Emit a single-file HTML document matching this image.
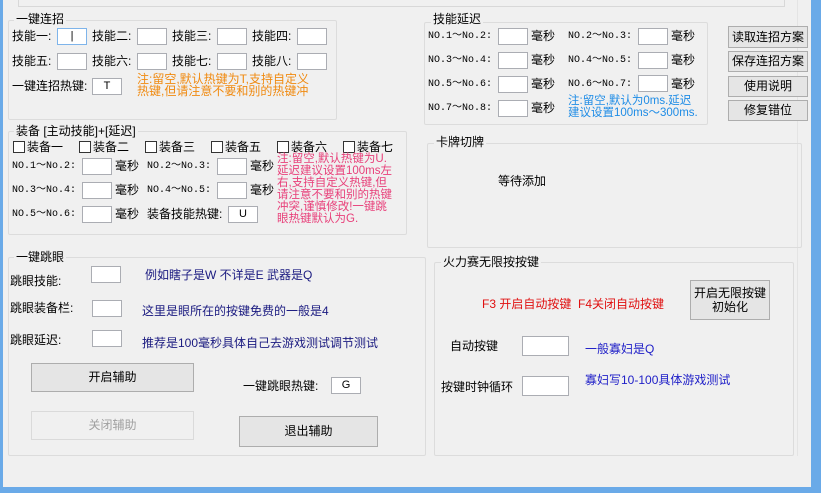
<!DOCTYPE html>
<html><head><meta charset="utf-8"><style>
*{margin:0;padding:0;box-sizing:border-box}
body{width:821px;height:493px;background:#f0f0f0;position:relative;overflow:hidden;font-family:"Liberation Sans","Noto Sans CJK SC",sans-serif;font-size:12px;color:#000}
div,span{position:absolute;white-space:nowrap;line-height:14px}
.g{border:1px solid #dcdcdc;border-radius:2px}
.gt{background:#f0f0f0;padding:0 2px;font-size:12px}
.i{background:#fff;border:1px solid #abadb3;width:30px;height:17px;text-align:center;font-size:11px;line-height:15px}
.b{background:#e5e5e5;border:1px solid #adadad;text-align:center;font-size:12px}
.c{width:12px;height:12px;border:1px solid #333;background:#fff;top:1px;left:0}
.n{font-family:"Liberation Mono",monospace;font-size:10px}
</style></head><body>
<div style="left:0;top:0;width:3px;height:493px;background:#6aaae8"></div>
<div style="left:811px;top:0;width:10px;height:493px;background:#6aaae8"></div>
<div style="left:0;top:487px;width:821px;height:6px;background:#6aaae8"></div>
<div style="left:18px;top:-2px;width:767px;height:9px;border:1px solid #d8d8d8"></div>
<div style="left:797px;top:0;width:1px;height:456px;background:#e4e4e4"></div>

<!-- 一键连招 -->
<div class="g" style="left:8px;top:20px;width:329px;height:100px"></div>
<div class="gt" style="left:14px;top:12px">一键连招</div>
<div style="left:12px;top:29px">技能一:</div><div class="i" style="left:57px;top:28px;border-color:#7eb4ea">|</div>
<div style="left:92px;top:29px">技能二:</div><div class="i" style="left:137px;top:28px"></div>
<div style="left:172px;top:29px">技能三:</div><div class="i" style="left:217px;top:28px"></div>
<div style="left:252px;top:29px">技能四:</div><div class="i" style="left:297px;top:28px"></div>
<div style="left:12px;top:54px">技能五:</div><div class="i" style="left:57px;top:53px"></div>
<div style="left:92px;top:54px">技能六:</div><div class="i" style="left:137px;top:53px"></div>
<div style="left:172px;top:54px">技能七:</div><div class="i" style="left:217px;top:53px"></div>
<div style="left:252px;top:54px">技能八:</div><div class="i" style="left:297px;top:53px"></div>
<div style="left:12px;top:79px">一键连招热键:</div><div class="i" style="left:92px;top:78px">T</div>
<div style="left:137px;top:73px;color:#f08a10;line-height:12px">注:留空,默认热键为T,支持自定义<br>热键,但请注意不要和别的热键冲</div>

<!-- 装备 -->
<div class="g" style="left:8px;top:131px;width:399px;height:104px"></div>
<div class="gt" style="left:14px;top:124px">装备 [主动技能]+[延迟]</div>
<div style="left:13px;top:140px"><span class="c"></span><span style="left:14px">装备一</span></div>
<div style="left:79px;top:140px"><span class="c"></span><span style="left:14px">装备二</span></div>
<div style="left:145px;top:140px"><span class="c"></span><span style="left:14px">装备三</span></div>
<div style="left:211px;top:140px"><span class="c"></span><span style="left:14px">装备五</span></div>
<div style="left:277px;top:140px"><span class="c"></span><span style="left:14px">装备六</span></div>
<div style="left:343px;top:140px"><span class="c"></span><span style="left:14px">装备七</span></div>
<div class="n" style="left:12px;top:160px">NO.1～No.2:</div><div class="i" style="left:82px;top:158px"></div><div style="left:115px;top:159px">毫秒</div>
<div class="n" style="left:147px;top:160px">NO.2～No.3:</div><div class="i" style="left:217px;top:158px"></div><div style="left:250px;top:159px">毫秒</div>
<div class="n" style="left:12px;top:184px">NO.3～No.4:</div><div class="i" style="left:82px;top:182px"></div><div style="left:115px;top:183px">毫秒</div>
<div class="n" style="left:147px;top:184px">NO.4～No.5:</div><div class="i" style="left:217px;top:182px"></div><div style="left:250px;top:183px">毫秒</div>
<div class="n" style="left:12px;top:208px">NO.5～No.6:</div><div class="i" style="left:82px;top:206px"></div><div style="left:115px;top:207px">毫秒</div>
<div style="left:147px;top:207px">装备技能热键:</div><div class="i" style="left:228px;top:206px">U</div>
<div style="left:277px;top:153px;color:#e8407a;line-height:12px;font-size:11.5px">注:留空,默认热键为U.<br>延迟建议设置100ms左<br>右,支持自定义热键,但<br>请注意不要和别的热键<br>冲突,谨慎修改!一键跳<br>眼热键默认为G.</div>

<!-- 技能延迟 -->
<div class="g" style="left:424px;top:22px;width:284px;height:103px"></div>
<div class="gt" style="left:431px;top:12px">技能延迟</div>
<div class="n" style="left:428px;top:30px">NO.1～No.2:</div><div class="i" style="left:498px;top:28px"></div><div style="left:531px;top:29px">毫秒</div>
<div class="n" style="left:568px;top:30px">NO.2～No.3:</div><div class="i" style="left:638px;top:28px"></div><div style="left:671px;top:29px">毫秒</div>
<div class="n" style="left:428px;top:54px">NO.3～No.4:</div><div class="i" style="left:498px;top:52px"></div><div style="left:531px;top:53px">毫秒</div>
<div class="n" style="left:568px;top:54px">NO.4～No.5:</div><div class="i" style="left:638px;top:52px"></div><div style="left:671px;top:53px">毫秒</div>
<div class="n" style="left:428px;top:78px">NO.5～No.6:</div><div class="i" style="left:498px;top:76px"></div><div style="left:531px;top:77px">毫秒</div>
<div class="n" style="left:568px;top:78px">NO.6～No.7:</div><div class="i" style="left:638px;top:75px"></div><div style="left:671px;top:77px">毫秒</div>
<div class="n" style="left:428px;top:102px">NO.7～No.8:</div><div class="i" style="left:498px;top:100px"></div><div style="left:531px;top:101px">毫秒</div>
<div style="left:568px;top:95px;color:#1e8ce6;line-height:12px;font-size:11.5px">注:留空,默认为0ms.延迟<br>建议设置100ms～300ms.</div>

<div class="b" style="left:728px;top:26px;width:80px;height:22px;line-height:20px">读取连招方案</div>
<div class="b" style="left:728px;top:51px;width:80px;height:21px;line-height:19px">保存连招方案</div>
<div class="b" style="left:728px;top:76px;width:80px;height:21px;line-height:19px">使用说明</div>
<div class="b" style="left:728px;top:100px;width:80px;height:21px;line-height:19px">修复错位</div>

<!-- 卡牌切牌 -->
<div class="g" style="left:427px;top:143px;width:375px;height:105px"></div>
<div class="gt" style="left:434px;top:135px">卡牌切牌</div>
<div style="left:498px;top:174px">等待添加</div>

<!-- 一键跳眼 -->
<div class="g" style="left:8px;top:257px;width:418px;height:199px"></div>
<div class="gt" style="left:14px;top:250px">一键跳眼</div>
<div style="left:10px;top:274px">跳眼技能:</div><div class="i" style="left:91px;top:266px"></div>
<div style="left:145px;top:268px;color:#1a1a80">例如瞎子是W 不详是E 武器是Q</div>
<div style="left:10px;top:301px">跳眼装备栏:</div><div class="i" style="left:92px;top:300px"></div>
<div style="left:142px;top:304px;color:#1a1a80">这里是眼所在的按键免费的一般是4</div>
<div style="left:10px;top:333px">跳眼延迟:</div><div class="i" style="left:92px;top:330px"></div>
<div style="left:142px;top:336px;color:#1a1a80">推荐是100毫秒具体自己去游戏测试调节测试</div>
<div class="b" style="left:31px;top:363px;width:163px;height:29px;line-height:27px">开启辅助</div>
<div class="b" style="left:31px;top:411px;width:163px;height:29px;line-height:27px;color:#a0a0a0;background:#f0f0f0;border-color:#dadada">关闭辅助</div>
<div style="left:243px;top:379px">一键跳眼热键:</div><div class="i" style="left:331px;top:377px">G</div>
<div class="b" style="left:239px;top:416px;width:139px;height:31px;line-height:29px">退出辅助</div>

<!-- 火力赛 -->
<div class="g" style="left:434px;top:262px;width:360px;height:194px"></div>
<div class="gt" style="left:441px;top:255px">火力赛无限按按键</div>
<div style="left:482px;top:297px;color:#e01010">F3 开启自动按键&nbsp;&nbsp;F4关闭自动按键</div>
<div class="b" style="left:690px;top:280px;width:80px;height:40px;line-height:14px;padding-top:5px">开启无限按键<br>初始化</div>
<div style="left:450px;top:339px">自动按键</div><div class="i" style="left:522px;top:336px;width:47px;height:20px"></div>
<div style="left:585px;top:342px;color:#2020c8">一般寡妇是Q</div>
<div style="left:441px;top:380px">按键时钟循环</div><div class="i" style="left:522px;top:376px;width:47px;height:20px"></div>
<div style="left:585px;top:373px;color:#2020c8">寡妇写10-100具体游戏测试</div>
</body></html>
